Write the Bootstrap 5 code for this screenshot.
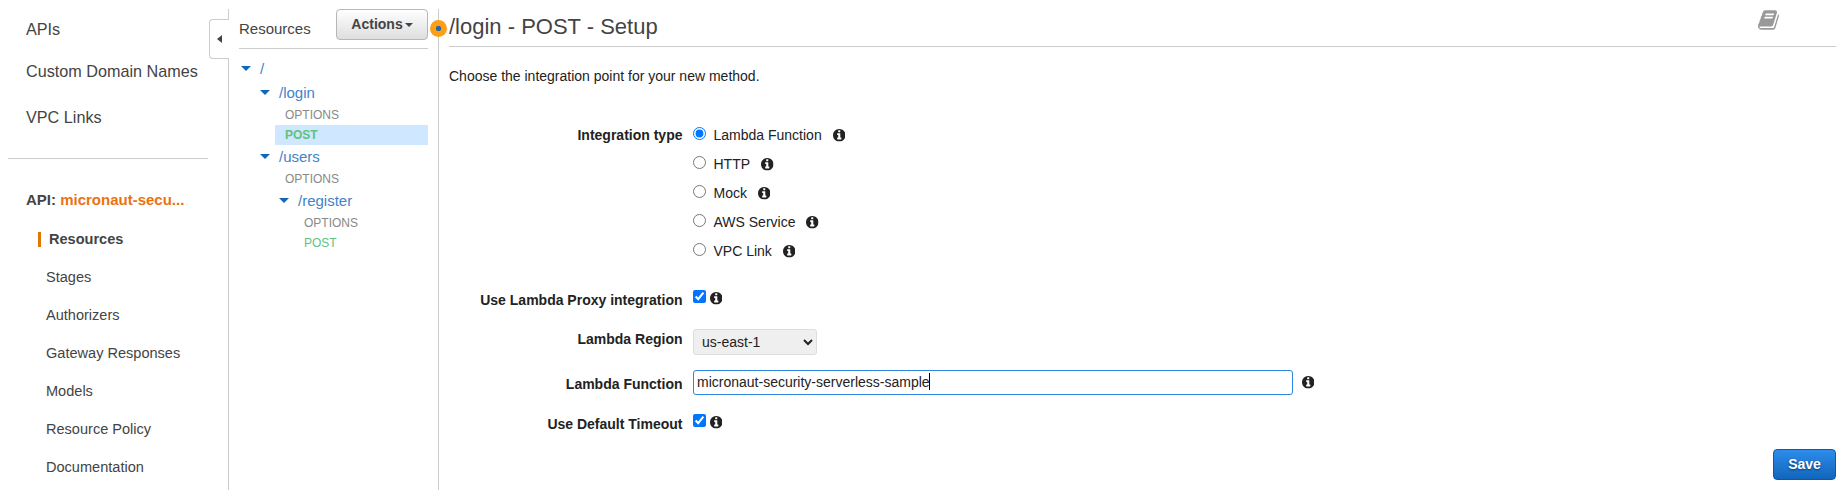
<!DOCTYPE html>
<html lang="en">
<head>
<meta charset="utf-8">
<title>API Gateway - Method Setup</title>
<link href="https://cdn.jsdelivr.net/npm/bootstrap@5.3.0/dist/css/bootstrap.min.css" rel="stylesheet">
<style>
  body { font-family: "Liberation Sans", Arial, sans-serif; font-size: 14px; line-height: 20px; color: #222; background: #fff; height: 490px; overflow: hidden; }
  a { text-decoration: none; color: inherit; }
  .console { height: 490px; padding-top: 9px; }
  .side { width: 228px; color: #444; }
  .side-top { font-size: 16.2px; padding: 10px 0 0 26px; }
  .side-rule { height: 1px; background: #ccc; margin: 31px 20px 0 8px; }
  .api-name { font-size: 15px; padding: 31px 0 0 26px; }
  .api-name span { color: #ec7211; }
  .side-list { font-size: 14.55px; padding: 19px 0 0 46px; gap: 18px; }
  .side-list .current { margin-left: -8px; padding-left: 11px; position: relative; }
  .side-list .current::before { content: ""; position: absolute; left: 0; top: 3px; width: 3px; height: 15px; background: #e07700; }
  .tree-pane { width: 210px; border-left: 1px solid #ccc; position: relative; }
  .collapse-tab { position: absolute; left: -20px; top: 10px; width: 20px; height: 40px; background: #fff; border: 1px solid #ccc; border-right: 0; border-radius: 4px 0 0 4px; }
  .collapse-tab svg { position: absolute; left: 7px; top: 15px; }
  .tree-head { height: 40px; margin: 0 10px 8px 10px; border-bottom: 1px solid #ccc; font-size: 15px; color: #444; }
  .tree-head > span { padding-top: 10px; }
  .btn-actions { width: 92px; height: 31px; padding: 0 0 2px; font-size: 14px; font-weight: bold; line-height: 20px; color: #444; border: 1px solid #b7b7b7; border-radius: 4px; background: linear-gradient(#fff, #dedede); }
  .tri { width: 0; height: 0; border: 4px solid transparent; border-top-color: #444; border-bottom: 0; margin: 2px 0 0 2px; }
  .tree { margin: 0 10px 0 12px; }
  .folder { height: 24px; font-size: 15px; color: #3f83c8; }
  .folder::before { content: ""; border: 5px solid transparent; border-top: 5px solid #1166bb; border-bottom: 0; margin-right: 9px; margin-top: -1px; }
  .folder-1 { padding-left: 19px; }
  .folder-2 { padding-left: 38px; }
  .method { height: 20px; font-size: 12px; color: #888; margin-left: 34px; padding-left: 10px; }
  .method-deep { margin-left: 53px; }
  .post { color: #5fc27e; }
  .chosen { background: #cfe7ff; font-weight: bold; }
  .setup { border-left: 1px solid #ccc; padding: 0 7px 0 10px; position: relative; }
  .drag-dot { position: absolute; left: -9px; top: 11px; width: 17px; height: 17px; border-radius: 50%; background: radial-gradient(circle, #146eb4 2.4px, #ff9d17 3px); }
  .setup-head { height: 38px; border-bottom: 1px solid #ccc; color: #444; }
  h1 { font-size: 22px; line-height: 26px; font-weight: normal; margin: 5px 0 0; }
  .book { margin: 1px 57px 0 0; }
  .intro { margin: 19px 0 0; }
  .setup-form { margin-top: 39px; display: grid; grid-template-columns: 233.5px 1fr; column-gap: 10.5px; }
  .setup-form > label, .setup-form > .label-text { font-weight: bold; text-align: right; white-space: nowrap; }
  .setup-form input[type=radio], .setup-form input[type=checkbox] { width: 13px; height: 13px; margin: 0; flex: none; }
  .option { height: 29px; }
  .option input { margin-top: 2px !important; }
  .option label { margin: 0 11px 0 7.5px; }
  .option .info { margin-top: 4px; }
  .info { width: 12.5px; height: 12.5px; flex: none; }
  .region { width: 124px; height: 26px; padding: 0 0 0 4px; border: 1px solid #ddd; border-radius: 3px; background-color: #efefef; color: #222; font-size: 14px; }
  .fn { width: 600px; height: 25px; padding: 0 3px 2px; border: 1px solid #2e86e0; border-radius: 3px; font-size: 14px; line-height: 20px; white-space: nowrap; }
  .fn i { width: 1px; height: 17px; background: #000; margin-left: -1px; }
  .btn-save { width: 63px; height: 31px; padding: 0 0 1px; border: 1px solid #0f58a8; border-radius: 4px; background: linear-gradient(#2d8ceb, #1166bb); color: #fff; font-size: 14px; font-weight: bold; line-height: 20px; text-shadow: 0 1px 2px #033a74; }
</style>
</head>
<body>
<svg width="0" height="0" class="position-absolute">
  <symbol id="info" viewBox="0 0 1536 1536">
    <path fill="#222" d="M1024 1248v-160q0-14-9-23t-23-9h-96V544q0-14-9-23t-23-9H544q-14 0-23 9t-9 23v160q0 14 9 23t23 9h96v320h-96q-14 0-23 9t-9 23v160q0 14 9 23t23 9h448q14 0 23-9t9-23zM896 352V192q0-14-9-23t-23-9H672q-14 0-23 9t-9 23v160q0 14 9 23t23 9h192q14 0 23-9t9-23zM1536 768q0 209-103 385.500T1153.500 1433 768 1536t-385.500-103T103 1153.500 0 768t103-385.500T382.500 103 768 0t385.500 103T1433 382.500 1536 768z"/>
  </symbol>
</svg>
<div class="console d-flex">
  <nav class="side flex-shrink-0">
    <div class="side-top d-flex flex-column">
      <a href="#">APIs</a>
      <a href="#" style="margin-top:22px">Custom Domain Names</a>
      <a href="#" style="margin-top:26px">VPC Links</a>
    </div>
    <div class="side-rule"></div>
    <div class="api-name fw-bold">API: <span>micronaut-secu...</span></div>
    <div class="side-list d-flex flex-column">
      <a href="#" class="current fw-bold">Resources</a>
      <a href="#">Stages</a>
      <a href="#">Authorizers</a>
      <a href="#">Gateway Responses</a>
      <a href="#">Models</a>
      <a href="#">Resource Policy</a>
      <a href="#">Documentation</a>
    </div>
  </nav>

  <section class="tree-pane flex-shrink-0">
    <div class="collapse-tab"><svg width="5" height="8" viewBox="0 0 5 8"><path d="M5 0v8L0 4z" fill="#444"/></svg></div>
    <div class="tree-head d-flex justify-content-between align-items-start">
      <span>Resources</span>
      <button class="btn btn-actions d-flex align-items-center justify-content-center" type="button">Actions<span class="tri"></span></button>
    </div>
    <div class="tree">
      <div class="folder d-flex align-items-center">/</div>
      <div class="folder folder-1 d-flex align-items-center">/login</div>
      <div class="method">OPTIONS</div>
      <div class="method post chosen">POST</div>
      <div class="folder folder-1 d-flex align-items-center">/users</div>
      <div class="method">OPTIONS</div>
      <div class="folder folder-2 d-flex align-items-center">/register</div>
      <div class="method method-deep">OPTIONS</div>
      <div class="method method-deep post">POST</div>
    </div>
  </section>

  <main class="setup flex-grow-1 d-flex flex-column">
    <span class="drag-dot"></span>
    <div class="setup-head d-flex justify-content-between align-items-start">
      <h1>/login - POST - Setup</h1>
      <svg class="book" width="21" height="20" viewBox="0 0 1664 1536"><path fill="#999" d="M1639 350q40 57 18 129l-275 906q-19 64-76.500 107.500T1183 1536H260q-77 0-148.500-53.500T12 1351q-24-67-2-127 0-4 3-27t4-37q1-8-3-21.500t-3-19.500q2-11 8-21t16.500-23.500T52 1051q23-38 45-91.500t30-91.500q3-10 .5-30t-.5-28q3-11 17-28t17-23q21-36 42-92t25-90q1-9-2.500-32t.5-28q4-13 22-30.500t22-22.500q19-26 42.500-84.500T340 283q1-8-3-25.500t-2-26.500q2-8 9-18t18-23 17-21q8-12 16.500-30.500t15-35 16-36 19.500-32 26.500-23.500 36-11.500T556 6l-1 3q38-9 51-9h761q74 0 114 56t18 130l-274 906q-36 119-71.500 153.500T1025 1280H156q-27 0-38 15-11 16-1 43 24 70 144 70h923q29 0 56-15.500t35-41.500l300-987q7-22 5-57 38 15 59 43zM575 352q-4 13 2 22.500t20 9.500h608q13 0 25.500-9.500T1247 352l21-64q4-13-2-22.500t-20-9.500H638q-13 0-25.500 9.500T596 288zm-83 256q-4 13 2 22.500t20 9.500h608q13 0 25.500-9.500T1164 608l21-64q4-13-2-22.500t-20-9.500H555q-13 0-25.500 9.500T513 544z"/></svg>
    </div>
    <p class="intro">Choose the integration point for your new method.</p>

    <form class="setup-form">
      <div class="label-text">Integration type</div>
      <div style="height:164px">
        <div class="option d-flex align-items-start"><input type="radio" name="t" id="t1" checked><label for="t1">Lambda Function</label><svg class="info"><use href="#info"/></svg></div>
        <div class="option d-flex align-items-start"><input type="radio" name="t" id="t2"><label for="t2">HTTP</label><svg class="info"><use href="#info"/></svg></div>
        <div class="option d-flex align-items-start"><input type="radio" name="t" id="t3"><label for="t3">Mock</label><svg class="info"><use href="#info"/></svg></div>
        <div class="option d-flex align-items-start"><input type="radio" name="t" id="t4"><label for="t4">AWS Service</label><svg class="info"><use href="#info"/></svg></div>
        <div class="option d-flex align-items-start"><input type="radio" name="t" id="t5"><label for="t5">VPC Link</label><svg class="info"><use href="#info"/></svg></div>
      </div>

      <label for="proxy" style="padding-top:1px">Use Lambda Proxy integration</label>
      <div class="d-flex align-items-start" style="height:40px"><input type="checkbox" id="proxy" checked style="margin-top:1px"><svg class="info" style="margin:3px 0 0 3.500px"><use href="#info"/></svg></div>

      <label for="region">Lambda Region</label>
      <div style="height:41px"><select class="region" id="region"><option>us-east-1</option></select></div>

      <div class="label-text" style="padding-top:4px">Lambda Function</div>
      <div class="d-flex align-items-start" style="height:43px"><div class="fn d-flex align-items-center">micronaut-security-serverless-sample<i></i></div><svg class="info" style="margin:6px 0 0 8.500px"><use href="#info"/></svg></div>

      <label for="timeout" style="padding-top:1px">Use Default Timeout</label>
      <div class="d-flex align-items-start"><input type="checkbox" id="timeout" checked style="margin-top:1px"><svg class="info" style="margin:3px 0 0 3.500px"><use href="#info"/></svg></div>
    </form>

    <div class="mt-auto d-flex justify-content-end" style="padding-bottom:10px"><button class="btn btn-save" type="button">Save</button></div>
  </main>
</div>
<script src="https://cdn.jsdelivr.net/npm/bootstrap@5.3.0/dist/js/bootstrap.bundle.min.js"></script>
</body>
</html>
